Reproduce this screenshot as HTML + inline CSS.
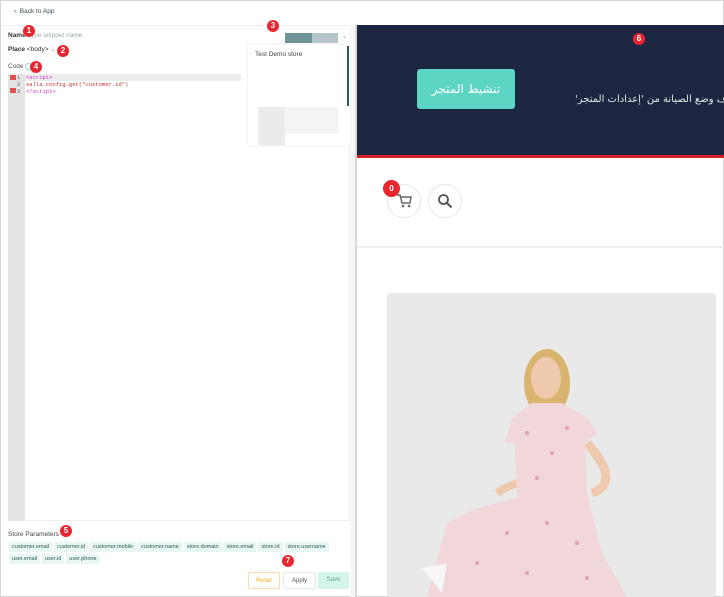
<!DOCTYPE html>
<html><head><meta charset="utf-8"><style>
*{box-sizing:border-box;margin:0;padding:0}
body{width:724px;height:597px;overflow:hidden;background:#fff;font-family:"Liberation Sans",sans-serif;position:relative;color:#333}
.a{position:absolute}
.badge{position:absolute;width:12px;height:12px;border-radius:50%;background:#e8262f;color:#fff;font-size:8px;font-weight:bold;text-align:center;line-height:12px}
.tag{display:inline-block;background:#e9f7f4;color:#2b5a55;font-size:5.5px;padding:2px 3px;margin:0 2px 2px 0;line-height:6px}
.btn{position:absolute;top:572px;height:17px;font-size:6px;text-align:center;line-height:17px;border-radius:2px}
</style></head><body>
<div class="a" style="left:0;top:0;width:724px;height:597px;border:1px solid #d5d5d5"></div>
<div class="a" style="left:14px;top:8px;font-size:6.5px;color:#3a4a55">&lsaquo;&nbsp; Back to App</div>
<div class="a" style="left:1px;top:25px;width:354px;height:1px;background:#eee"></div>
<div class="a" style="left:8px;top:32px;font-size:6.5px"><b style="color:#333">Name</b> <span style="color:#9aa;">Type snippet name</span></div>
<div class="badge" style="left:23px;top:25px">1</div>
<div class="a" style="left:8px;top:45px;font-size:6.5px;color:#333"><b>Place</b> &lt;body&gt; <span style="color:#999">&#8964;</span></div>
<div class="badge" style="left:57px;top:45px">2</div>
<div class="a" style="left:8px;top:63px;font-size:6.5px;color:#555">Code</div>
<div class="a" style="left:25px;top:63px;width:7px;height:7px;border-radius:50%;border:1px solid #8dd"></div>
<div class="badge" style="left:30px;top:61px">4</div>
<div class="a" style="left:8px;top:74px;width:342px;height:447px;border:1px solid #eee;border-top:none"></div>
<div class="a" style="left:8px;top:74px;width:17px;height:447px;background:#e4e4e4"></div>
<div class="a" style="left:25px;top:74px;width:216px;height:7px;background:#ececec"></div>
<div class="a" style="left:10px;top:75px;width:6px;height:5px;background:#d9534f"></div>
<div class="a" style="left:10px;top:88px;width:6px;height:5px;background:#d9534f"></div>
<div class="a" style="left:17px;top:74px;font-size:5.5px;line-height:7px;color:#555;font-family:'Liberation Mono',monospace">1<br>2<br>3</div>
<div class="a" style="left:26px;top:74px;font-size:5.5px;line-height:7px;font-family:'Liberation Mono',monospace"><span style="color:#c3c">&lt;script&gt;</span><br><span style="color:#c33">salla.config.get("customer.id")</span><br><span style="color:#c3c">&lt;/script&gt;</span></div>
<div class="badge" style="left:267px;top:20px">3</div>
<div class="a" style="left:285px;top:33px;width:27px;height:10px;background:#6e9498"></div>
<div class="a" style="left:312px;top:33px;width:26px;height:10px;background:#b4c6c9"></div>
<div class="a" style="left:342px;top:33px;font-size:6px;color:#888">&#8964;</div>
<div class="a" style="left:248px;top:45px;width:102px;height:100px;background:#fff;box-shadow:0 0 3px rgba(0,0,0,.12)"></div>
<div class="a" style="left:255px;top:51px;font-size:6.5px;color:#444">Test Demo store</div>
<div class="a" style="left:347px;top:46px;width:2px;height:60px;background:#2c5a62"></div>
<div class="a" style="left:258px;top:107px;width:27px;height:38px;background:#ebebeb"></div>
<div class="a" style="left:285px;top:107px;width:53px;height:27px;background:#f4f4f4"></div>
<div class="a" style="left:8px;top:531px;font-size:6.5px;color:#444">Store Parameters</div>
<div class="badge" style="left:60px;top:525px">5</div>
<div class="a" style="left:9px;top:542px;width:340px;line-height:0">
<span class="tag">customer.email</span><span class="tag">customer.id</span><span class="tag">customer.mobile</span><span class="tag">customer.name</span><span class="tag">store.domain</span><span class="tag">store.email</span><span class="tag">store.id</span><span class="tag">store.username</span><br>
<span class="tag">user.email</span><span class="tag">user.id</span><span class="tag">user.phone</span></div>
<div class="badge" style="left:282px;top:555px">7</div>
<div class="btn" style="left:248px;width:32px;border:1px solid #fbd9a8;color:#f5a623">Reset</div>
<div class="btn" style="left:283px;width:33px;border:1px solid #e0efec;color:#555">Apply</div>
<div class="btn" style="left:318px;width:31px;background:#d4f4ec;color:#6a8">Save</div>
<div class="a" style="left:350px;top:25px;width:7px;height:572px;background:#f7f7f7"></div>
<div class="a" style="left:355px;top:25px;width:2px;height:572px;background:#d8d8d8"></div>
<div class="a" style="left:357px;top:25px;width:367px;height:130px;background:#1c2640"></div>
<div class="a" style="left:357px;top:155px;width:367px;height:3px;background:#d81f26"></div>
<div class="badge" style="left:633px;top:33px">6</div>
<div class="a" style="left:417px;top:69px;width:98px;height:40px;background:#5dd5c4;border-radius:3px;color:#fff;font-family:'DejaVu Sans',sans-serif;font-size:12px;text-align:center;line-height:40px">تنشيط المتجر</div>
<div class="a" style="left:575px;top:92px;width:149px;height:16px;overflow:hidden"><div style="position:absolute;left:0;top:2px;color:#e6e6e6;font-family:'DejaVu Sans',sans-serif;font-size:10px;white-space:nowrap;direction:rtl">يمكنك إيقاف وضع الصيانة من 'إعدادات المتجر'</div></div>
<div class="a" style="left:387px;top:184px;width:34px;height:34px;border-radius:50%;border:1px solid #e6e6e6"></div>
<div class="a" style="left:428px;top:184px;width:34px;height:34px;border-radius:50%;border:1px solid #e6e6e6"></div>
<svg class="a" style="left:396px;top:193px" width="16" height="16" viewBox="0 0 16 16"><path d="M1 2h3l2 8h8l1-6H5" fill="none" stroke="#666" stroke-width="1.5"/><circle cx="7" cy="13" r="1.3" fill="#666"/><circle cx="13" cy="13" r="1.3" fill="#666"/></svg>
<svg class="a" style="left:437px;top:193px" width="16" height="16" viewBox="0 0 16 16"><circle cx="6.5" cy="6.5" r="4.5" fill="none" stroke="#555" stroke-width="1.8"/><path d="M10 10l4.5 4.5" stroke="#555" stroke-width="2"/></svg>
<div class="a" style="left:383px;top:180px;width:17px;height:17px;border-radius:50%;background:#e8262f;color:#fff;font-size:8px;font-weight:bold;text-align:center;line-height:17px">0</div>
<div class="a" style="left:357px;top:246px;width:367px;height:2px;background:#eee"></div>
<div class="a" style="left:387px;top:293px;width:329px;height:304px;background:#e9e9e9;border-radius:3px;overflow:hidden">
<svg width="329" height="304" viewBox="0 0 329 304">
<ellipse cx="160" cy="90" rx="23" ry="34" fill="#d9b46e"/>
<ellipse cx="159" cy="85" rx="15" ry="21" fill="#efc9ad"/>
<path d="M110 200 Q140 180 160 195" stroke="#efc9ad" stroke-width="8" fill="none"/>
<path d="M200 150 Q235 190 205 200" stroke="#efc9ad" stroke-width="9" fill="none"/>
<path d="M145 110 L175 110 L200 125 L210 140 L198 150 L200 200 L215 260 L240 304 L40 304 L60 230 L90 215 L130 205 L128 150 L118 150 L125 125 Z" fill="#f1d7d9"/>
<path d="M55 300 L35 275 L60 270" fill="#f6f6f6"/>
<g fill="#d88f98" opacity=".7"><circle cx="140" cy="140" r="2"/><circle cx="165" cy="160" r="2"/><circle cx="180" cy="135" r="2"/><circle cx="150" cy="185" r="2"/><circle cx="120" cy="240" r="2"/><circle cx="160" cy="230" r="2"/><circle cx="190" cy="250" r="2"/><circle cx="90" cy="270" r="2"/><circle cx="140" cy="280" r="2"/><circle cx="200" cy="285" r="2"/></g>
</svg></div>
</body></html>
